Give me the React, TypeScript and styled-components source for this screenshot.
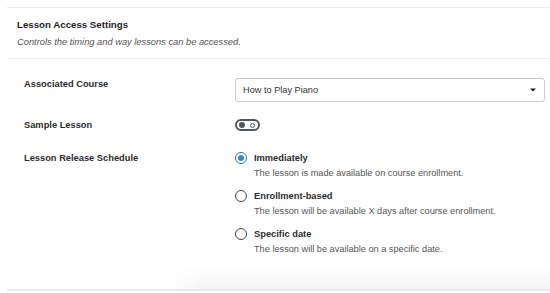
import React from "react";
import styled, { createGlobalStyle } from "styled-components";

const Global = createGlobalStyle`
  html, body { margin: 0; padding: 0; background: #fff; }
  body { font-family: "Liberation Sans", Arial, sans-serif; color: #1e1e1e; }
`;

const Page = styled.div`
  width: 550px;
  height: 293px;
  overflow: hidden;
  padding: 7px 0 0 7px;
  box-sizing: border-box;
`;

const Panel = styled.section`
  position: relative;
  border-top: 1px solid #ececec;
  border-bottom: 2px solid #e8e8e8;
  &::after {
    content: "";
    position: absolute;
    left: 158px;
    right: 0;
    bottom: 0;
    height: 24px;
    background: linear-gradient(to bottom, rgba(0, 0, 0, 0), rgba(0, 0, 0, 0.045));
    -webkit-mask-image: linear-gradient(to right, transparent 0, #000 40px);
    mask-image: linear-gradient(to right, transparent 0, #000 40px);
    pointer-events: none;
  }
`;

const Header = styled.header`
  padding: 10px 10px 10px 10px;
  border-bottom: 1px solid #ececec;
`;

const Title = styled.h2`
  margin: 0;
  font-size: 9.7px;
  font-weight: 700;
  color: #1e1e1e;
  line-height: 14px;
`;

const Subtitle = styled.p`
  margin: 4px 0 0;
  font-size: 9.3px;
  font-style: italic;
  color: #555;
  line-height: 12px;
`;

const Body = styled.div`
  padding: 19px 5px 34px 17px;
  display: flex;
  flex-direction: column;
  gap: 17px;
`;

const Row = styled.div<{ $after?: number }>`
  display: grid;
  grid-template-columns: 211px 1fr;
  align-items: start;
  padding-bottom: ${(p) => p.$after ?? 0}px;
`;

const Label = styled.div`
  font-size: 9.3px;
  font-weight: 700;
  color: #2c2c2c;
  line-height: 12px;
`;

const Select = styled.div`
  height: 24px;
  border: 1px solid #c9ced4;
  border-radius: 3px;
  display: flex;
  align-items: center;
  justify-content: space-between;
  padding: 0 8px 0 7px;
  font-size: 9.2px;
  color: #333;
  box-sizing: border-box;
`;

const Toggle = styled.div`
  width: 25px;
  height: 12px;
  border: 2px solid #50575e;
  border-radius: 7px;
  box-sizing: border-box;
  display: flex;
  align-items: center;
  padding: 0 2px;
  justify-content: space-between;
`;

const Knob = styled.span`
  width: 6px;
  height: 6px;
  border-radius: 50%;
  background: #50575e;
`;

const Dot = styled.span`
  width: 3px;
  height: 3px;
  border-radius: 50%;
  border: 1px solid #50575e;
  margin-right: 1px;
`;

const Options = styled.div`
  display: flex;
  flex-direction: column;
  gap: 11px;
`;

const Option = styled.div`
  display: grid;
  grid-template-columns: 19px 1fr;
  row-gap: 3px;
  align-items: center;
`;

const Radio = styled.span<{ $checked?: boolean }>`
  width: 12px;
  height: 12px;
  border-radius: 50%;
  border: 1.5px solid ${(p) => (p.$checked ? "#2271b1" : "#3c434a")};
  box-sizing: border-box;
  display: flex;
  align-items: center;
  justify-content: center;
  &::after {
    content: "";
    width: 6px;
    height: 6px;
    border-radius: 50%;
    background: ${(p) => (p.$checked ? "#2a8ad4" : "transparent")};
  }
`;

const OptTitle = styled.div`
  font-size: 9.3px;
  font-weight: 700;
  color: #2c2c2c;
  line-height: 12px;
`;

const OptDesc = styled.div`
  grid-column: 2;
  font-size: 9.2px;
  color: #555;
  line-height: 12px;
`;

const options = [
  { t: "Immediately", d: "The lesson is made available on course enrollment.", c: true },
  { t: "Enrollment-based", d: "The lesson will be available X days after course enrollment.", c: false },
  { t: "Specific date", d: "The lesson will be available on a specific date.", c: false },
];

export default function App() {
  return (
    <>
      <Global />
      <Page>
        <Panel>
          <Header>
            <Title>Lesson Access Settings</Title>
            <Subtitle>Controls the timing and way lessons can be accessed.</Subtitle>
          </Header>
          <Body>
            <Row>
              <Label>Associated Course</Label>
              <Select>
                <span>How to Play Piano</span>
                <svg width="6" height="4" viewBox="0 0 6 4">
                  <path d="M0 0.5h6L3 3.5z" fill="#1e1e1e" />
                </svg>
              </Select>
            </Row>
            <Row $after={4}>
              <Label>Sample Lesson</Label>
              <Toggle>
                <Knob />
                <Dot />
              </Toggle>
            </Row>
            <Row>
              <Label>Lesson Release Schedule</Label>
              <Options>
                {options.map((o) => (
                  <Option key={o.t}>
                    <Radio $checked={o.c} />
                    <OptTitle>{o.t}</OptTitle>
                    <OptDesc>{o.d}</OptDesc>
                  </Option>
                ))}
              </Options>
            </Row>
          </Body>
        </Panel>
      </Page>
    </>
  );
}
